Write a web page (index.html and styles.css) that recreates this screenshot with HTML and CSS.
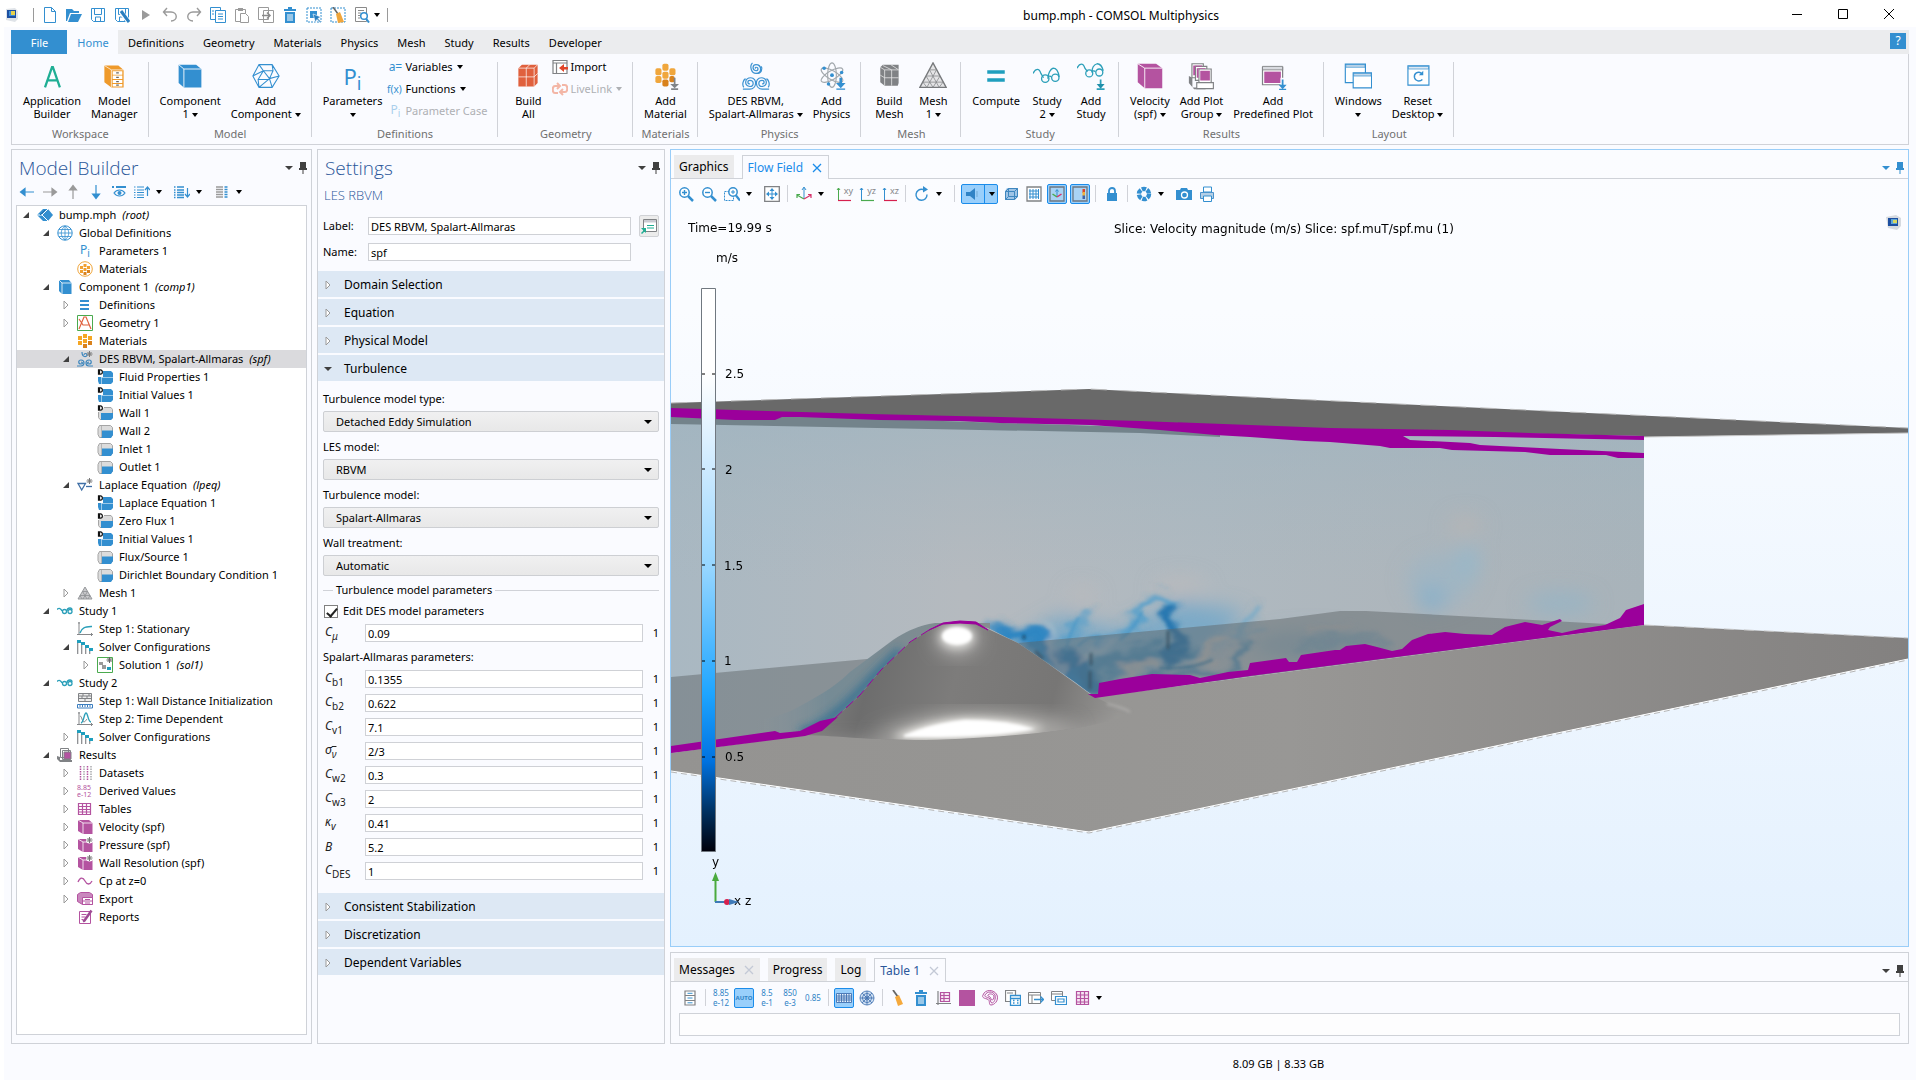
FILE: index.html
```html
<!DOCTYPE html>
<html lang="en">
<head>
    <meta charset="UTF-8">
    <meta name="viewport" content="width=device-width, initial-scale=1.0">
    <title>bump.mph - COMSOL Multiphysics</title>
    <link rel="stylesheet" href="styles.css">
</head>
<body>
    <!-- Icon sprite -->
    <svg class="sprite" aria-hidden="true">
        <!-- quick access -->
        <symbol id="i-app" viewBox="0 0 16 16"><path d="M2 2l9-1 3 3v8l-3 3-9-2z" fill="#dfe3e8"/><rect x="3" y="3" width="9" height="8" fill="#1d4fa0"/><rect x="5" y="4" width="6" height="5" fill="#3f8fd8"/><rect x="7" y="4" width="4" height="4" fill="#e9d24a"/></symbol>
        <symbol id="i-new" viewBox="0 0 16 16"><path d="M2.500.5h7l4 4v11h-11zM9.500.5v4h4" fill="#fff" stroke="#338fd0"/></symbol>
        <symbol id="i-open" viewBox="0 0 16 16"><path d="M0 2h6l2 2h5v2H4L1 14H0z" fill="#338fd0"/><path d="M5 7h11l-4 8H2z" fill="#338fd0"/></symbol>
        <symbol id="i-save" viewBox="0 0 16 16"><path d="M1.500 1.500h13v13h-11l-2-2zM4.500 1.500v6h7v-6M5.500 14v-4h5v4" fill="none" stroke="#338fd0"/></symbol>
        <symbol id="i-saveas" viewBox="0 0 16 16"><path d="M1.500 1.500h13v13h-11l-2-2zM4.500 1.500v6h7v-6M5.500 14v-4h5v4" fill="none" stroke="#338fd0"/><path d="M7 5l8 10" stroke="#fff" stroke-width="5"/><path d="M7 4l8 11" stroke="#2a7fc0" stroke-width="3"/></symbol>
        <symbol id="i-play" viewBox="0 0 16 16"><path d="M4 3l8 5-8 5z" fill="#9a9a9a"/></symbol>
        <symbol id="i-undo" viewBox="0 0 16 16"><path d="M5 1L1.500 5 5 9M2 5h7c7 0 7 9 0 9" fill="none" stroke="#9a9a9a" stroke-width="1.400"/></symbol>
        <symbol id="i-redo" viewBox="0 0 16 16"><path d="M11 1l3.500 4L11 9M14 5H7c-7 0-7 9 0 9" fill="none" stroke="#9a9a9a" stroke-width="1.400"/></symbol>
        <symbol id="i-copy" viewBox="0 0 16 16"><path d="M.5.5h10v12H.5z" fill="#fff" stroke="#338fd0"/><path d="M5.500 3.500h10v12h-10z" fill="#fff" stroke="#338fd0"/><path d="M8 7h5M8 9.500h5M8 12h5M2 4h2M2 7h2" stroke="#338fd0"/></symbol>
        <symbol id="i-paste" viewBox="0 0 16 16"><path d="M1.500 2.500h10v12h-10z" fill="#fff" stroke="#9a9a9a"/><path d="M4 1h5v3H4z" fill="#9a9a9a"/><path d="M6.500 6.500h5l3 3v6h-8z" fill="#fff" stroke="#9a9a9a"/></symbol>
        <symbol id="i-dup" viewBox="0 0 16 16"><path d="M.5.5h10v12H.5zM5.500 3.500h10v12h-10z" fill="#fff" stroke="#9a9a9a"/><path d="M4 8.500h8M9 5.500l3 3-3 3" fill="none" stroke="#8a8a8a" stroke-width="1.500"/></symbol>
        <symbol id="i-trash" viewBox="0 0 16 16"><path d="M2 2h4V0h4v2h4v2H2zM3 5h10v11H3z" fill="#338fd0"/><path d="M6 7v7M8 7v7M10 7v7" stroke="#fff"/></symbol>
        <symbol id="i-select" viewBox="0 0 16 16"><path d="M1 1h14v14H1z" fill="none" stroke="#338fd0" stroke-dasharray="2 1"/><path d="M4 4h7v7H4z" fill="#338fd0"/><path d="M7 7l8 3-3 1.500 3 3-1 1-3-3-1.500 3z" fill="#2a7fc0" stroke="#fff" stroke-width=".6"/></symbol>
        <symbol id="i-clearsel" viewBox="0 0 16 16"><path d="M1 1h14v14H1z" fill="none" stroke="#338fd0" stroke-dasharray="2 1"/><path d="M3 0l5 7" stroke="#666" stroke-width="1.500"/><path d="M6 7l4-2 4 10-6 1z" fill="#f0a63c"/></symbol>
        <symbol id="i-find" viewBox="0 0 16 16"><path d="M1.500.5h11v14h-11z" fill="#fff" stroke="#8a8a8a"/><path d="M4 3.500h6M4 6h3M4 8.500h2M4 11h2" stroke="#8a8a8a"/><circle cx="10" cy="9" r="3.300" fill="#fff" stroke="#338fd0" stroke-width="1.500"/><path d="M12 11.500l3 4" stroke="#338fd0" stroke-width="2"/></symbol>
        <!-- ribbon, large -->
        <symbol id="r-appbuilder" viewBox="0 0 32 32"><path d="M8 29l8-23h1l8 23M10.500 21h12" fill="none" stroke="#1fae94" stroke-width="2.600"/></symbol>
        <symbol id="r-manager" viewBox="0 0 32 32"><path d="M5 4h16l6 5v20H13L5 23z" fill="#ef9a2b"/><path d="M5 4l8 5h14M13 9v20" stroke="#fff" stroke-width=".8" fill="none"/><path d="M14.500 10.500h11v4h-11zM14.500 15.500h11v4h-11zM14.500 20.500h11v3.500h-11zM14.500 25h11v3h-11z" fill="#fff"/><path d="M18.500 12.500h3M18.500 17.500h3M18.500 22.500h3M18.500 26.500h3" stroke="#666" stroke-width="1.500"/></symbol>
        <symbol id="r-component" viewBox="0 0 32 32"><path d="M3 3h20l6 5v21H9l-6-5z" fill="#338fd0"/><path d="M3 3l6 5h20M9 8v21" fill="none" stroke="#fff" stroke-width="1"/></symbol>
        <symbol id="r-addcomp" viewBox="0 0 32 32"><path d="M8 3h15l8 13-8 13H8L1 16zM8 3l5 7h11l-1-7M13 10L1 16M13 10l7 9 11-3M24 10l-4 9M20 19l3 10M8 29l12-10M8 29l-1-9h13M7 20l6-10" fill="none" stroke="#338fd0" stroke-width="1.200"/></symbol>
        <symbol id="r-buildall" viewBox="0 0 32 32"><path d="M5 7l4-4h18v21l-4 4H5z" fill="#e0603d"/><path d="M5 7h18v21M23 7l4-4M14 7v21M5 17h18l4-4M14 7l4-4" fill="none" stroke="#fff" stroke-width=".8"/></symbol>
        <symbol id="r-addmat" viewBox="0 0 32 32"><g fill="#f0a63c"><rect x="5" y="7" width="7" height="8" rx="2"/><rect x="5" y="16" width="7" height="8" rx="2"/><rect x="13" y="2" width="7" height="8" rx="2"/><rect x="13" y="11" width="7" height="8" rx="2"/><rect x="21" y="7" width="7" height="8" rx="2"/></g><g fill="#d9821c"><rect x="13" y="20" width="7" height="8" rx="2"/><rect x="21" y="16" width="6" height="7" rx="2"/></g><path d="M27 18v8M23 31h8" stroke="#808488" stroke-width="2"/><path d="M22 25h10l-5 5z" fill="#808488"/></symbol>
        <symbol id="r-swirl" viewBox="0 0 32 32"><g fill="none" stroke="#3d93d2" stroke-width="1.400"><path d="M12 1c-4 4-1 12 4 12 7 0 7-10 0-10-4 0-5 6 0 7 3 0 3-4 0-4-1 0-1 1-.5 1.500M17 13c5 0 7-5 5-8"/><path d="M1 31h8c8 0 9-13 1-13-7 0-8 9-1 10 5 0 5-7 0-7-3 0-3 4 0 4M2 29c-2-3-1-8 2-10"/><path d="M31 31h-8c-8 0-9-13-1-13 7 0 8 9 1 10-5 0-5-7 0-7 3 0 3 4 0 4M30 29c2-3 1-8-2-10"/></g></symbol>
        <symbol id="r-addphys" viewBox="0 0 32 32"><g fill="none" stroke="#a2a8ad" stroke-width="1.300"><ellipse cx="16" cy="15" rx="5" ry="14"/><ellipse cx="16" cy="15" rx="5" ry="14" transform="rotate(60 16 15)"/><ellipse cx="16" cy="15" rx="5" ry="14" transform="rotate(-60 16 15)"/></g><g fill="#338fd0"><circle cx="16" cy="15" r="2.200"/><circle cx="7" cy="7" r="2"/><circle cx="27" cy="12" r="2"/><circle cx="12" cy="25" r="2"/></g><path d="M26 18v8" stroke="#338fd0" stroke-width="3"/><path d="M20.500 24h11L26 30z" fill="#338fd0"/><path d="M21 31h10" stroke="#338fd0" stroke-width="1.500"/></symbol>
        <symbol id="r-buildmesh" viewBox="0 0 32 32"><path d="M6 6l3-3h18v21l-1 3H11l-5-4z" fill="#808285"/><path d="M6 6l5 3h16M11 9v18M19 9v18M11 18h16M6 15l5 3M9 4l10 5M18 3l9 6" fill="none" stroke="#e6e6e6" stroke-width=".9"/></symbol>
        <symbol id="r-mesh" viewBox="0 0 32 32"><path d="M16 1l15 28H1z" fill="#e4e4e6" stroke="#76787b" stroke-width="1.500"/><path d="M12 9h8M8 16h16M4.500 23h23M12 9l11 20M20 9L9 29M8 16l8 13M24 16l-8 13M4.500 23L9 29M27.500 23L23 29" fill="none" stroke="#85878a" stroke-width=".9"/></symbol>
        <symbol id="r-compute" viewBox="0 0 32 32"><path d="M6 11.500h20M6 20.500h20" stroke="#1f9fbe" stroke-width="4"/></symbol>
        <symbol id="r-study" viewBox="0 0 32 32"><g fill="none" stroke="#2b9fb9" stroke-width="1.500"><path d="M0 13c3-6 7-6 9 0l3 5M17 17c1-1 3-1 4 0M17 19c0-6 3-11 6-12 4 0 6 4 7 10"/><circle cx="14" cy="19" r="4.200"/><circle cx="25.500" cy="18" r="4.200"/></g></symbol>
        <symbol id="r-addstudy" viewBox="0 0 32 32"><g fill="none" stroke="#2b9fb9" stroke-width="1.500"><path d="M0 7c3-6 7-6 9 0l3 4M17 11c1-1 3-1 4 0M17 12c0-6 3-9 6-10 4 0 6 4 7 8"/><circle cx="14" cy="13" r="4"/><circle cx="25.500" cy="12" r="4"/></g><path d="M27 20v6M22.500 31h9" stroke="#2b9fb9" stroke-width="2"/><path d="M22.500 25h9L27 30.500z" fill="#1f8faa"/></symbol>
        <symbol id="r-velocity" viewBox="0 0 32 32"><path d="M2 2h21l7 5v23H10l-8-7z" fill="#b453a0"/><path d="M2 2l8 5h20M10 7v23" fill="none" stroke="#fff" stroke-width="1"/></symbol>
        <symbol id="r-plotgroup" viewBox="0 0 32 32"><path d="M1 16l4 2v11h16l-1 2H7l-6-7z" fill="#808285"/><g fill="#fff" stroke="#808285" stroke-width="1.300"><path d="M4.500 2h13v16h-13z"/><path d="M8.500 5h13v16h-13z"/><path d="M12.500 8h14v16h-14z"/></g><path d="M6 4h10v1H8v10H6zM10 7h10v1h-8v10h-2zM14 10h11v11H14z" fill="#b453a0"/><path d="M10 23.500h19v7H10z" fill="#fff" stroke="#808285" stroke-width="1.300"/></symbol>
        <symbol id="r-predef" viewBox="0 0 32 32"><path d="M4 6h23v20H4z" fill="#fff" stroke="#808285" stroke-width="1.400"/><path d="M4 5h23v4H4z" fill="#d9dbe0" stroke="#808285"/><path d="M6 11h19v13H6z" fill="#b453a0"/><path d="M27 18v13" stroke="#fafbff" stroke-width="5"/><path d="M27 20v8M23 31.500h8" stroke="#338fd0" stroke-width="2"/><path d="M22.500 26h9L27 31z" fill="#338fd0"/></symbol>
        <symbol id="r-windows" viewBox="0 0 32 32"><g fill="#fff" stroke="#338fd0" stroke-width="1.300"><path d="M1.500 2.500h23v21h-23z"/><path d="M10.500 12.500h21v17h-21z"/></g><path d="M2 3h22v3H2zM11 13h20v3H11z" fill="#c5d9ea" stroke="#338fd0" stroke-width=".8"/></symbol>
        <symbol id="r-reset" viewBox="0 0 32 32"><path d="M4.500 4.500h24v22h-24z" fill="#fff" stroke="#338fd0" stroke-width="1.300"/><path d="M5 5h23v3H5z" fill="#dfe9f3" stroke="#338fd0" stroke-width=".8"/><path d="M20 13c-4-3-9 0-8 5 1 4 6 5 9 2" fill="none" stroke="#338fd0" stroke-width="1.600"/><path d="M17 15h5v-5z" fill="#338fd0"/></symbol>
        <symbol id="i-import" viewBox="0 0 16 16"><path d="M1 1.500h14v13H1zM1 4h14M4.500 4v10" fill="#fff" stroke="#808285" stroke-width="1.200"/><path d="M7 9l5-4v3h4v2.500h-4V13z" fill="#e0452a"/></symbol>
        <symbol id="i-livelink" viewBox="0 0 16 16"><path d="M6 12H3c-3 0-3-7 0-7h5M10 4h3c3 0 3 7 0 7H8M5 2l3 3-3 3M11 8l-3 3 3 3" fill="none" stroke="#f3b6a6" stroke-width="2"/></symbol>
        <!-- pins, chevrons -->
        <symbol id="i-pin" viewBox="0 0 10 12"><path d="M2 0h6v6h1v2H1V6h1zM4.500 8h1v4h-1z" fill="currentColor"/></symbol>
        <symbol id="i-x" viewBox="0 0 12 12"><path d="M2 2l8 8M10 2l-8 8" stroke="currentColor" stroke-width="1.300"/></symbol>
        <symbol id="i-open-tri" viewBox="0 0 8 8"><path d="M7 1v6H1z" fill="#404040"/></symbol>
        <symbol id="i-closed-tri" viewBox="0 0 8 10"><path d="M2 1l4 4-4 4z" fill="#fff" stroke="#9a9a9a"/></symbol>
        <symbol id="i-down-tri" viewBox="0 0 10 8"><path d="M1 2h8L5 6z" fill="#404040"/></symbol>
        <!-- model builder toolbar -->
        <symbol id="i-left" viewBox="0 0 16 16"><path d="M15 8H2M6 4.500L1.500 8 6 11.500z" fill="#338fd0" stroke="#338fd0" stroke-width="1.200"/></symbol>
        <symbol id="i-right" viewBox="0 0 16 16"><path d="M1 8h13M10 4.500L14.500 8 10 11.500z" fill="#9a9a9a" stroke="#9a9a9a" stroke-width="1.200"/></symbol>
        <symbol id="i-up" viewBox="0 0 16 16"><path d="M8 15V2M4.500 6L8 1.500 11.500 6z" fill="#9a9a9a" stroke="#9a9a9a" stroke-width="1.200"/></symbol>
        <symbol id="i-down" viewBox="0 0 16 16"><path d="M8 1v13M4.500 10L8 14.500 11.500 10z" fill="#338fd0" stroke="#338fd0" stroke-width="1.200"/></symbol>
        <symbol id="i-eye" viewBox="0 0 16 16"><path d="M1 3h2M5 3h10" stroke="#338fd0" stroke-width="2"/><path d="M3 9c3-4 8-4 11 0-3 4-8 4-11 0z" fill="none" stroke="#338fd0" stroke-width="1.200"/><circle cx="8.500" cy="9" r="2" fill="#338fd0"/></symbol>
        <symbol id="i-listup" viewBox="0 0 16 16"><path d="M0 3h10M0 6h10M0 8.500h10M0 11h10M0 13.500h10" stroke="#338fd0" stroke-dasharray="1.500 1.500 7"/><path d="M13.500 12V4M11 6l2.500-3L16 6" fill="none" stroke="#338fd0" stroke-width="1.200"/></symbol>
        <symbol id="i-listdown" viewBox="0 0 16 16"><path d="M0 3h10M0 6h10M0 8.500h10M0 11h10M0 13.500h10" stroke="#338fd0" stroke-width="1.400" stroke-dasharray="1.500 1.500 7"/><path d="M13.500 4v8M11 10l2.500 3 2.500-3" fill="none" stroke="#338fd0" stroke-width="1.200"/></symbol>
        <symbol id="i-listcols" viewBox="0 0 16 16"><path d="M2 3h7M2 5.500h7M2 8h7M2 10.500h7M2 13h7" stroke="#9a9a9a" stroke-width="1.400"/><path d="M10.500 3h3M10.500 5.500h3M10.500 8h3M10.500 10.500h3M10.500 13h3" stroke="#338fd0" stroke-width="1.400"/></symbol>
        <!-- tree -->
        <symbol id="t-root" viewBox="0 0 16 16"><path d="M0 8l6-6h5l5 6-5 6H6z" fill="#338fd0"/><path d="M11 2L5 8l6 6M0 8h5" fill="none" stroke="#fff"/><path d="M3 8l5-5" stroke="#1f6ca8"/></symbol>
        <symbol id="t-globe" viewBox="0 0 16 16"><circle cx="8" cy="8" r="7.200" fill="#fff" stroke="#338fd0"/><path d="M8 1v14M1 8h14M2 4.500h12M2 11.500h12M8 1c-5 4-5 10 0 14M8 1c5 4 5 10 0 14" fill="none" stroke="#338fd0" stroke-width=".8"/></symbol>
        <symbol id="t-matglobe" viewBox="0 0 16 16"><circle cx="8" cy="8" r="7.300" fill="#fff" stroke="#f0a63c"/><g fill="#f0a030"><path d="M3 5h3v3H3zM3 9h3v3H3zM6.500 3h3v3h-3zM6.500 7h3v3h-3zM10 5h3v3h-3z"/></g><path d="M6.500 11h3v3h-3zM10 9h3v3h-3z" fill="#d9821c"/></symbol>
        <symbol id="t-mat" viewBox="0 0 16 16"><path d="M1 3h4v4H1zM1 8h4v4H1zM6 1h4v4H6zM6 6h4v4H6zM11 3h4v4h-4z" fill="#f5a623"/><path d="M6 11h4v4H6zM11 8h4v4h-4z" fill="#d9821c"/></symbol>
        <symbol id="t-comp" viewBox="0 0 16 16"><path d="M2 1h10l2.500 3v11H5l-3-3z" fill="#338fd0"/><path d="M2 1l3 3h9.500M5 4v11" fill="none" stroke="#fff" stroke-width=".8"/></symbol>
        <symbol id="t-defs" viewBox="0 0 16 16"><path d="M3 4h9M3 8h9M3 12h9" stroke="#338fd0" stroke-width="2"/></symbol>
        <symbol id="t-geom" viewBox="0 0 16 16"><path d="M.5.5h15v15H.5z" fill="#fff" stroke="#4aaa4e"/><path d="M2 14L7 2h2l5 12M2 4l4 6h6" fill="none" stroke="#e0603d" stroke-width="1.200"/></symbol>
        <symbol id="t-swirl" viewBox="0 0 16 16"><g fill="none" stroke="#3d86bd" stroke-width="1.200"><path d="M0 15h4c4 0 4-6 0-6-3 0-3 4 0 4 2 0 2-2 0-2M16 15h-4c-4 0-4-6 0-6 3 0 3 4 0 4-2 0-2-2 0-2M5 1c0 6 5 5 5 3s-3-2-3 0"/></g><path d="M12.500 0v6M9.500 3h6M10.500 1l4 4M14.500 1l-4 4" stroke="#777"/></symbol>
        <symbol id="t-dfull" viewBox="0 0 16 16"><path d="M6 2h8l2 2v9l-2 2H2l-1-3V8h5z" fill="#338fd0"/><path d="M4 8.500h12M4.500 8v7" stroke="#b9d8ee" stroke-width=".8"/><path d="M1.500.8h2c2.500 0 2.500 4.400 0 4.400h-2zM2.500 1v4" fill="none" stroke="#111" stroke-width="1.200"/></symbol>
        <symbol id="t-dhalf" viewBox="0 0 16 16"><path d="M7 2.500h7l1.500 2v8l-1.500 2H3l-1.500-2V7" fill="#dcdcdc" stroke="#a5a5a5"/><path d="M4 8h12v5l-2 2H4z" fill="#338fd0"/><path d="M1.500.8h2c2.500 0 2.500 4.400 0 4.400h-2zM2.500 1v4" fill="none" stroke="#111" stroke-width="1.200"/></symbol>
        <symbol id="t-half" viewBox="0 0 16 16"><path d="M2.500 2.500h11l2 2v8l-2 2h-11l-1.500-3v-6z" fill="#dcdcdc" stroke="#a5a5a5"/><path d="M4.500 7.500H16V12l-2 3H4.500z" fill="#338fd0"/><path d="M4.500 3v11" stroke="#b5b5b5"/></symbol>
        <symbol id="t-laplace" viewBox="0 0 16 16"><path d="M1 6.500h7.500L4.700 13z" fill="none" stroke="#3f6fa6" stroke-width="1.300"/><path d="M9 9.500h6" stroke="#3f6fa6" stroke-width="1.300"/><path d="M12.500 1v6M9.500 4h6M10.500 2l4 4M14.500 2l-4 4" stroke="#777"/></symbol>
        <symbol id="t-mesh" viewBox="0 0 16 16"><path d="M8 2l7 12H1z" fill="#c9c9cc" stroke="#97999c"/><path d="M5.500 6.500h5M3 10.500h10M5.500 6.500L10 14M10.500 6.500L6 14M3 10.500L5 14M13 10.500L11 14" stroke="#8d8f92" stroke-width=".8"/></symbol>
        <symbol id="t-study" viewBox="0 0 16 16"><g fill="none" stroke="#2b9fb9" stroke-width="1.300"><path d="M0 6.500c2-2 4-1 5 1.500M10 8c0-2 1-3 3-3s2 1 2 2"/><circle cx="7.500" cy="8.500" r="2"/><circle cx="13" cy="8.500" r="2"/></g></symbol>
        <symbol id="t-stat" viewBox="0 0 16 16"><path d="M2 1v13M0 13.500h16M1 2h2M14.500 12v3" stroke="#85878a" fill="none"/><path d="M3 12c2-6 5-6 12-6.500" fill="none" stroke="#2b9fb9" stroke-width="1.400"/></symbol>
        <symbol id="t-time" viewBox="0 0 16 16"><path d="M2 1v13M0 13.500h16M1 2h2M14.500 12v3M3 5c2 0 2 6 4 6 1 0 2-2 3-3" stroke="#85878a" fill="none"/><path d="M4 12c3-1 3-10 5-10s2 9 5 9" fill="none" stroke="#2b9fb9" stroke-width="1.400"/></symbol>
        <symbol id="t-solver" viewBox="0 0 16 16"><path d="M.7 4v11M4.700 6v9M8.700 8v7M12.700 11v4" stroke="#85878a" stroke-width="1.200"/><path d="M0 1h4v3H0zM4 3h4v3H4zM8 6h4v3H8zM12 9h4v3h-4z" fill="#1f9fbe"/></symbol>
        <symbol id="t-sol" viewBox="0 0 16 16"><path d="M.5.5h15v15H.5z" fill="#fff" stroke="#4aaa4e"/><path d="M2 5h4v3H2zM5 8h4v4H5z" fill="#9a9a9a"/><path d="M10 10h4v3h-4z" fill="#1f9fbe"/><path d="M12.500 0v6M9.500 3h6M10.500 1l4 4M14.500 1l-4 4" stroke="#666"/></symbol>
        <symbol id="t-wall" viewBox="0 0 16 16"><path d="M1.500.5h13v8h-13zM1.500 3h13M1.500 5.500h13M6 .5V3M10 3v2.500M5 3v2.500M8 5.500v3M12 .5V3" fill="#eee" stroke="#808285"/><path d="M.5 11.500h15v3.500H.5z" fill="#fff" stroke="#3c7ec0"/><path d="M3 12v2M5.500 12v2M8 12v2M10.500 12v2M13 12v2" stroke="#3c7ec0"/></symbol>
        <symbol id="t-results" viewBox="0 0 16 16"><path d="M3.500 1.500h8v9h-8zM5.500 3.500h8v9h-8z" fill="#fff" stroke="#808285"/><path d="M0 9l3 1v3h12v2H3l-3-3z" fill="#808285"/><path d="M7 5h7v7H7z" fill="#b453a0" stroke="#808285"/></symbol>
        <symbol id="t-data" viewBox="0 0 16 16"><path d="M3.500 1v14M10.500 1v14" stroke="#b453a0" stroke-width="1.500" stroke-dasharray="1.500 1"/><path d="M7 1v14M14 1v14" stroke="#a9a9ad" stroke-width="1.500" stroke-dasharray="1.500 1"/></symbol>
        <symbol id="t-table" viewBox="0 0 16 16"><path d="M1.500 2.500h12v11h-12zM1.500 5.500h12M1.500 8.500h12M1.500 11h12M5.500 2.500v11M9.500 2.500v11" fill="#fff" stroke="#b453a0" stroke-width="1.200"/></symbol>
        <symbol id="t-vel" viewBox="0 0 16 16"><path d="M1 1h11l3.500 3v11H6l-5-3z" fill="#b453a0"/><path d="M1 1l5 3h9.500M6 4v11" fill="none" stroke="#fff" stroke-width=".8"/></symbol>
        <symbol id="t-velstar" viewBox="0 0 16 16"><path d="M1 2h11l3.500 3v10H6l-5-3z" fill="#b453a0"/><path d="M1 2l5 3h9.500M6 5v10" fill="none" stroke="#fff" stroke-width=".8"/><circle cx="12.500" cy="3" r="3.500" fill="#fff"/><path d="M12.500 0v6M9.500 3h6M10.500 1l4 4M14.500 1l-4 4" stroke="#777"/></symbol>
        <symbol id="t-wave" viewBox="0 0 16 16"><path d="M1 9c2-5 5-5 7-1s5 4 7 0" fill="none" stroke="#b453a0" stroke-width="1.300"/></symbol>
        <symbol id="t-export" viewBox="0 0 16 16"><path d="M.5 3.500l3-2h9l3 2v10h-10l-5-3z" fill="#c987bd" stroke="#b453a0"/><path d="M5.500 6.500h10v7h-10zM5.500 10h10M8 8.500h5M8 12h5" fill="#fff" stroke="#b453a0"/></symbol>
        <symbol id="t-report" viewBox="0 0 16 16"><path d="M2.500 2.500h11v12h-11zM4.500 5.500h5M4.500 8h4M4.500 10.500h2" fill="#fff" stroke="#b453a0"/><path d="M14.500 1.500l-7 10-1.500 1" stroke="#9e4a94" stroke-width="2.500"/></symbol>
        <symbol id="i-panel" viewBox="0 0 16 16"><path d="M2.500 1.500h13v12h-13z" fill="#fff" stroke="#808285"/><path d="M3 2h12v2.500H3z" fill="#c9cbd2"/><path d="M6 7.500h7M6 10h7" stroke="#1fae94"/><path d="M0 10h5v5l-1.500-1.500L1 16l-1-1 2.500-2.500z" fill="#1fae94"/></symbol>
        <!-- graphics toolbar -->
        <symbol id="g-in" viewBox="0 0 16 16"><circle cx="6.500" cy="6.500" r="4.700" fill="#fff" stroke="#338fd0" stroke-width="1.500"/><path d="M10 10l5 5" stroke="#338fd0" stroke-width="2.500"/><path d="M4 6.500h5M6.500 4v5" stroke="#338fd0" stroke-width="1.400"/></symbol>
        <symbol id="g-out" viewBox="0 0 16 16"><circle cx="6.500" cy="6.500" r="4.700" fill="#fff" stroke="#338fd0" stroke-width="1.500"/><path d="M10 10l5 5" stroke="#338fd0" stroke-width="2.500"/><path d="M4 6.500h5" stroke="#338fd0" stroke-width="1.400"/></symbol>
        <symbol id="g-box" viewBox="0 0 16 16"><path d="M.5 5.500h9v9h-9z" fill="none" stroke="#338fd0" stroke-dasharray="2 1"/><circle cx="9" cy="6" r="4.200" fill="#fff" stroke="#338fd0" stroke-width="1.500"/><path d="M12 9.500l4 5" stroke="#338fd0" stroke-width="2.200"/><path d="M7 6h4M9 4v4" stroke="#338fd0"/></symbol>
        <symbol id="g-extent" viewBox="0 0 16 16"><path d="M.7.700h14.600v14.600H.7z" fill="#fff" stroke="#808285" stroke-width="1.300"/><path d="M8 2l2.500 3h-5zM8 14l2.500-3h-5zM2 8l3-2.500v5zM14 8l-3-2.500v5z" fill="#338fd0"/><path d="M8 5v6M5 8h6" stroke="#338fd0"/></symbol>
        <symbol id="g-axes" viewBox="0 0 16 16"><path d="M8 13V2M6 4l2-3 2 3" fill="none" stroke="#338fd0"/><path d="M8 13L1 9M1 12V8.500h3" fill="none" stroke="#4aaa4e" stroke-width="1.200"/><path d="M8 13l7-4M12 8.500h3V12" fill="none" stroke="#d6336c" stroke-width="1.200"/></symbol>
        <symbol id="g-xy" viewBox="0 0 16 16"><path d="M2.500 15V2M1 4l1.500-2L4 4" fill="none" stroke="#4aaa4e"/><path d="M2 14.500h13" stroke="#d6204e" stroke-width="1.200"/></symbol>
        <symbol id="g-yz" viewBox="0 0 16 16"><path d="M2.500 15V2M1 4l1.500-2L4 4" fill="none" stroke="#338fd0"/><path d="M2 14.500h13" stroke="#4aaa4e" stroke-width="1.200"/></symbol>
        <symbol id="g-xz" viewBox="0 0 16 16"><path d="M2.500 15V2M1 4l1.500-2L4 4" fill="none" stroke="#338fd0"/><path d="M2 14.500h13" stroke="#d6204e" stroke-width="1.200"/></symbol>
        <symbol id="g-rot" viewBox="0 0 16 16"><path d="M9 3.500a5.500 5.500 0 1 0 4 5" fill="none" stroke="#338fd0" stroke-width="1.400"/><path d="M9 0l5 3.500-5 3z" fill="#338fd0"/></symbol>
        <symbol id="g-light" viewBox="0 0 16 16"><path d="M2 6h4l5-4v12l-5-4H2z" fill="#2f83c6"/><path d="M13 5v6" stroke="#7fb7e2" stroke-width="1.500"/></symbol>
        <symbol id="g-wire" viewBox="0 0 16 16"><path d="M4 2h11v9l-3 3H2V5z" fill="#9fc4e6"/><path d="M2.500 5.500h9v8h-9zM5.500 2.500h9v8h-9zM2.500 5.500l3-3M11.500 5.500l3-3M11.500 13.500l3-3M2.500 13.500l3-3" fill="none" stroke="#3f87bf"/></symbol>
        <symbol id="g-grid" viewBox="0 0 16 16"><path d="M1 1h14v14H1z" fill="#fff" stroke="#808285" stroke-width="1.300"/><path d="M4 3v10M7 3v10M10 3v10M3 5h10M3 8h10M3 11h10M12.500 3v10" stroke="#338fd0"/></symbol>
        <symbol id="g-triad" viewBox="0 0 16 16"><path d="M1 1h14v14H1z" fill="#a9d3f5" stroke="#6d7780" stroke-width="1.300"/><path d="M8 11V4M6.500 5.500L8 3.500l1.500 2" stroke="#338fd0" fill="none"/><path d="M8 11L3.500 8" stroke="#4aaa4e" stroke-width="1.500"/><path d="M8 11l4.500-3" stroke="#d6336c" stroke-width="1.500"/></symbol>
        <symbol id="g-legend" viewBox="0 0 16 16"><path d="M1 1h14v14H1z" fill="#a9d3f5" stroke="#6d7780" stroke-width="1.300"/><path d="M10.500 3h2.500v4h-2.500z" fill="#d9452a"/><path d="M10.500 6h2.500v4h-2.500z" fill="#f0b23c"/><path d="M10.500 9.500h2.500V13h-2.500z" fill="#3f62a8"/></symbol>
        <symbol id="g-lock" viewBox="0 0 16 16"><path d="M3 7h10v8H3z" fill="#338fd0"/><path d="M5 8V5c0-4 6-4 6 0v3" fill="none" stroke="#338fd0" stroke-width="1.800"/></symbol>
        <symbol id="g-aperture" viewBox="0 0 16 16"><circle cx="8" cy="8" r="5" fill="none" stroke="#338fd0" stroke-width="4.500" stroke-dasharray="4.200 1"/><circle cx="8" cy="8" r="2.500" fill="#fafbff"/></symbol>
        <symbol id="g-camera" viewBox="0 0 16 16"><path d="M0 4h4l1-2h6l1 2h4v10H0z" fill="#338fd0"/><circle cx="8.500" cy="9" r="3" fill="none" stroke="#fff" stroke-width="1.300"/></symbol>
        <symbol id="g-print" viewBox="0 0 16 16"><path d="M4.500 1h8v5h-8z" fill="#fff" stroke="#338fd0"/><path d="M1.500 6.500h13v6h-13z" fill="#b5cfe6" stroke="#4b93cc"/><path d="M4.500 10h8v5.500h-8z" fill="#fff" stroke="#338fd0"/></symbol>
        <!-- table toolbar -->
        <symbol id="b-prec" viewBox="0 0 16 16"><path d="M3 1h10v14H3zM3 5.500h10M3 10.500h10" fill="#fff" stroke="#808285" stroke-width="1.200"/><path d="M5.500 3.300h5M5.500 8h5M5.500 12.800h5" stroke="#338fd0"/></symbol>
        <symbol id="b-full" viewBox="0 0 16 16"><path d="M.5 3.500h15v9H.5zM.5 6h15M.5 8h15M.5 10h15M3 4v8M5.500 4v8M8 4v8M10.500 4v8M13 4v8" fill="#e8f3fd" stroke="#3f6fb0" stroke-width=".9"/></symbol>
        <symbol id="b-polar" viewBox="0 0 16 16"><circle cx="8" cy="8" r="7" fill="#cfdff2" stroke="#5a86bd"/><circle cx="8" cy="8" r="4.500" fill="none" stroke="#5a86bd"/><circle cx="8" cy="8" r="2" fill="none" stroke="#5a86bd"/><path d="M8 1v14M1 8h14M3 3l10 10M13 3L3 13" stroke="#3f6fb0" stroke-width=".8"/></symbol>
        <symbol id="b-broom" viewBox="0 0 16 16"><path d="M3 0l5 7" stroke="#666" stroke-width="1.800"/><path d="M5 7l4-2 4 9-5 2z" fill="#f5a93c"/></symbol>
        <symbol id="b-graph" viewBox="0 0 16 16"><path d="M2 1v14M0 13.500h15" stroke="#808285" stroke-width="1.200"/><path d="M4.500 2.500h9v9h-9zM4.500 5.500h9M4.500 8.500h9M8 2.500v9" fill="#f6e6f3" stroke="#b453a0" stroke-width="1.200"/></symbol>
        <symbol id="b-square" viewBox="0 0 16 16"><path d="M0 0h16v16H0z" fill="#b453a0"/></symbol>
        <symbol id="b-contour" viewBox="0 0 16 16"><g fill="none" stroke="#b453a0"><path d="M1 5c2-6 11-6 14 0 2 6-3 10-6 10s0-5-4-6-5-2-4-4z"/><path d="M3 5c2-4 8-4 10 0 1 4-1 8-3 8s-1-4-3-5-5-1-4-3z"/><path d="M6 5c2-2 5-1 6 1 0 3-1 4-2 4s-1-2-2-3-3-1-2-2z"/></g></symbol>
        <symbol id="b-copytab" viewBox="0 0 16 16"><path d="M.5.5h10v11H.5zM2 3h6" fill="#fff" stroke="#808285" stroke-width="1.200"/><path d="M5.500 5.500h10v10h-10zM6 8.500h9M8 10.500h1.500M8 13h1.500M12 10.500h1.500M12 13h1.500" fill="#fff" stroke="#338fd0" stroke-width="1.300"/></symbol>
        <symbol id="b-exptab" viewBox="0 0 16 16"><path d="M.5 2.500h12v11H.5zM.5 5h12M4 5v8" fill="#fff" stroke="#808285"/><path d="M6 9.500h9M12.500 6.500l3 3-3 3" fill="none" stroke="#338fd0" stroke-width="1.400"/></symbol>
        <symbol id="b-wins" viewBox="0 0 16 16"><path d="M.5 1.500h11v9H.5zM1 4h10" fill="#fff" stroke="#808285"/><path d="M4.500 6.500h11v8h-11zM7 9h6v3H7z" fill="#fff" stroke="#338fd0" stroke-width="1.200"/></symbol>
        <symbol id="b-newtab" viewBox="0 0 16 16"><path d="M2.500 1.500h12v13h-12zM2.500 5h12M2.500 8.500h12M2.500 12h12M6.500 1.500v13M10.500 1.500v13" fill="#f6e6f3" stroke="#b453a0" stroke-width="1.200"/></symbol>
    </svg>

    <!-- Title bar -->
    <header class="titlebar">
        <svg class="app-icon"><use href="#i-app"/></svg>
        <span class="qsep"></span>
        <div class="quick">
            <button aria-label="New"><svg><use href="#i-new"/></svg></button>
            <button aria-label="Open"><svg><use href="#i-open"/></svg></button>
            <button aria-label="Save"><svg><use href="#i-save"/></svg></button>
            <button aria-label="Save As"><svg><use href="#i-saveas"/></svg></button>
            <button aria-label="Run"><svg><use href="#i-play"/></svg></button>
            <button aria-label="Undo"><svg><use href="#i-undo"/></svg></button>
            <button aria-label="Redo"><svg><use href="#i-redo"/></svg></button>
            <button aria-label="Copy"><svg><use href="#i-copy"/></svg></button>
            <button aria-label="Paste"><svg><use href="#i-paste"/></svg></button>
            <button aria-label="Duplicate"><svg><use href="#i-dup"/></svg></button>
            <button aria-label="Delete"><svg><use href="#i-trash"/></svg></button>
            <button aria-label="Select"><svg><use href="#i-select"/></svg></button>
            <button aria-label="Clear Selection"><svg><use href="#i-clearsel"/></svg></button>
            <button aria-label="Find"><svg><use href="#i-find"/></svg></button>
        </div>
        <i class="caret"></i>
        <span class="qsep after"></span>
        <h1>bump.mph - COMSOL Multiphysics</h1>
        <div class="winctl">
            <button aria-label="Minimize"><svg viewBox="0 0 12 12"><path d="M1 6.500h10" stroke="#000"/></svg></button>
            <button aria-label="Maximize"><svg viewBox="0 0 12 12"><path d="M1.500 1.500h9v9h-9z" fill="none" stroke="#000"/></svg></button>
            <button aria-label="Close"><svg viewBox="0 0 12 12"><path d="M1 1l10 10M11 1L1 11" stroke="#000"/></svg></button>
        </div>
    </header>

    <div class="app">
        <!-- Ribbon -->
        <nav class="ribbon-tabs">
            <button class="file">File</button>
            <button class="active">Home</button>
            <button>Definitions</button>
            <button>Geometry</button>
            <button>Materials</button>
            <button>Physics</button>
            <button>Mesh</button>
            <button>Study</button>
            <button>Results</button>
            <button>Developer</button>
            <button class="help">?</button>
        </nav>
        <div class="ribbon">
            <section class="group">
                <div class="items">
                    <button class="big"><svg><use href="#r-appbuilder"/></svg><span>Application<br>Builder</span></button>
                    <button class="big"><svg><use href="#r-manager"/></svg><span>Model<br>Manager</span></button>
                </div>
                <h2>Workspace</h2>
            </section>
            <section class="group">
                <div class="items">
                    <button class="big"><svg><use href="#r-component"/></svg><span>Component<br>1 <i class="caret"></i></span></button>
                    <button class="big"><svg><use href="#r-addcomp"/></svg><span>Add<br>Component <i class="caret"></i></span></button>
                </div>
                <h2>Model</h2>
            </section>
            <section class="group">
                <div class="items">
                    <button class="big"><b class="pi">P<sub>i</sub></b><span>Parameters<br><i class="caret"></i></span></button>
                    <div class="stack">
                        <button><b class="glyph">a=</b>Variables <i class="caret"></i></button>
                        <button><b class="glyph fx">f(x)</b>Functions <i class="caret"></i></button>
                        <button disabled><b class="glyph">P<sub>i</sub></b>Parameter Case</button>
                    </div>
                </div>
                <h2>Definitions</h2>
            </section>
            <section class="group">
                <div class="items">
                    <button class="big wide"><svg><use href="#r-buildall"/></svg><span>Build<br>All</span></button>
                    <div class="stack">
                        <button><svg><use href="#i-import"/></svg>Import</button>
                        <button disabled><svg><use href="#i-livelink"/></svg>LiveLink <i class="caret"></i></button>
                    </div>
                </div>
                <h2>Geometry</h2>
            </section>
            <section class="group">
                <div class="items">
                    <button class="big"><svg><use href="#r-addmat"/></svg><span>Add<br>Material</span></button>
                </div>
                <h2>Materials</h2>
            </section>
            <section class="group">
                <div class="items">
                    <button class="big"><svg><use href="#r-swirl"/></svg><span>DES RBVM,<br>Spalart-Allmaras <i class="caret"></i></span></button>
                    <button class="big"><svg><use href="#r-addphys"/></svg><span>Add<br>Physics</span></button>
                </div>
                <h2>Physics</h2>
            </section>
            <section class="group">
                <div class="items">
                    <button class="big"><svg><use href="#r-buildmesh"/></svg><span>Build<br>Mesh</span></button>
                    <button class="big"><svg><use href="#r-mesh"/></svg><span>Mesh<br>1 <i class="caret"></i></span></button>
                </div>
                <h2>Mesh</h2>
            </section>
            <section class="group">
                <div class="items">
                    <button class="big"><svg><use href="#r-compute"/></svg><span>Compute</span></button>
                    <button class="big"><svg><use href="#r-study"/></svg><span>Study<br>2 <i class="caret"></i></span></button>
                    <button class="big"><svg><use href="#r-addstudy"/></svg><span>Add<br>Study</span></button>
                </div>
                <h2>Study</h2>
            </section>
            <section class="group">
                <div class="items">
                    <button class="big"><svg><use href="#r-velocity"/></svg><span>Velocity<br>(spf) <i class="caret"></i></span></button>
                    <button class="big"><svg><use href="#r-plotgroup"/></svg><span>Add Plot<br>Group <i class="caret"></i></span></button>
                    <button class="big"><svg><use href="#r-predef"/></svg><span>Add<br>Predefined Plot</span></button>
                </div>
                <h2>Results</h2>
            </section>
            <section class="group">
                <div class="items">
                    <button class="big"><svg><use href="#r-windows"/></svg><span>Windows<br><i class="caret"></i></span></button>
                    <button class="big"><svg><use href="#r-reset"/></svg><span>Reset<br>Desktop <i class="caret"></i></span></button>
                </div>
                <h2>Layout</h2>
            </section>
        </div>

        <main class="desktop">
            <!-- Model Builder -->
            <section class="panel builder">
                <div class="panel-head"><h2>Model Builder</h2><i class="caret big-caret"></i><svg class="pin"><use href="#i-pin"/></svg></div>
                <div class="toolbar">
                    <button aria-label="Back"><svg><use href="#i-left"/></svg></button>
                    <button aria-label="Forward"><svg><use href="#i-right"/></svg></button>
                    <button aria-label="Move Up"><svg><use href="#i-up"/></svg></button>
                    <button aria-label="Move Down"><svg><use href="#i-down"/></svg></button>
                    <button aria-label="Show"><svg><use href="#i-eye"/></svg></button>
                    <button aria-label="Collapse"><svg><use href="#i-listup"/></svg></button>
                    <button class="drop" aria-label="Collapse options"><i class="caret"></i></button>
                    <button aria-label="Expand"><svg><use href="#i-listdown"/></svg></button>
                    <button class="drop" aria-label="Expand options"><i class="caret"></i></button>
                    <button aria-label="Columns"><svg><use href="#i-listcols"/></svg></button>
                    <button class="drop" aria-label="Column options"><i class="caret"></i></button>
                </div>
                <ul class="tree">
                    <li class="l0"><svg class="tw"><use href="#i-open-tri"/></svg><svg><use href="#t-root"/></svg>bump.mph <em>(root)</em></li>
                    <li class="l1"><svg class="tw"><use href="#i-open-tri"/></svg><svg><use href="#t-globe"/></svg>Global Definitions</li>
                    <li class="l2"><i class="tw"></i><b class="glyph">P<sub>i</sub></b>Parameters 1</li>
                    <li class="l2"><i class="tw"></i><svg><use href="#t-matglobe"/></svg>Materials</li>
                    <li class="l1"><svg class="tw"><use href="#i-open-tri"/></svg><svg><use href="#t-comp"/></svg>Component 1 <em>(comp1)</em></li>
                    <li class="l2"><svg class="tw"><use href="#i-closed-tri"/></svg><svg><use href="#t-defs"/></svg>Definitions</li>
                    <li class="l2"><svg class="tw"><use href="#i-closed-tri"/></svg><svg><use href="#t-geom"/></svg>Geometry 1</li>
                    <li class="l2"><i class="tw"></i><svg><use href="#t-mat"/></svg>Materials</li>
                    <li class="l2 selected"><svg class="tw"><use href="#i-open-tri"/></svg><svg><use href="#t-swirl"/></svg>DES RBVM, Spalart-Allmaras <em>(spf)</em></li>
                    <li class="l3"><i class="tw"></i><svg><use href="#t-dfull"/></svg>Fluid Properties 1</li>
                    <li class="l3"><i class="tw"></i><svg><use href="#t-dfull"/></svg>Initial Values 1</li>
                    <li class="l3"><i class="tw"></i><svg><use href="#t-dhalf"/></svg>Wall 1</li>
                    <li class="l3"><i class="tw"></i><svg><use href="#t-half"/></svg>Wall 2</li>
                    <li class="l3"><i class="tw"></i><svg><use href="#t-half"/></svg>Inlet 1</li>
                    <li class="l3"><i class="tw"></i><svg><use href="#t-half"/></svg>Outlet 1</li>
                    <li class="l2"><svg class="tw"><use href="#i-open-tri"/></svg><svg><use href="#t-laplace"/></svg>Laplace Equation <em>(lpeq)</em></li>
                    <li class="l3"><i class="tw"></i><svg><use href="#t-dfull"/></svg>Laplace Equation 1</li>
                    <li class="l3"><i class="tw"></i><svg><use href="#t-dhalf"/></svg>Zero Flux 1</li>
                    <li class="l3"><i class="tw"></i><svg><use href="#t-dfull"/></svg>Initial Values 1</li>
                    <li class="l3"><i class="tw"></i><svg><use href="#t-half"/></svg>Flux/Source 1</li>
                    <li class="l3"><i class="tw"></i><svg><use href="#t-half"/></svg>Dirichlet Boundary Condition 1</li>
                    <li class="l2"><svg class="tw"><use href="#i-closed-tri"/></svg><svg><use href="#t-mesh"/></svg>Mesh 1</li>
                    <li class="l1"><svg class="tw"><use href="#i-open-tri"/></svg><svg><use href="#t-study"/></svg>Study 1</li>
                    <li class="l2"><i class="tw"></i><svg><use href="#t-stat"/></svg>Step 1: Stationary</li>
                    <li class="l2"><svg class="tw"><use href="#i-open-tri"/></svg><svg><use href="#t-solver"/></svg>Solver Configurations</li>
                    <li class="l3"><svg class="tw"><use href="#i-closed-tri"/></svg><svg><use href="#t-sol"/></svg>Solution 1 <em>(sol1)</em></li>
                    <li class="l1"><svg class="tw"><use href="#i-open-tri"/></svg><svg><use href="#t-study"/></svg>Study 2</li>
                    <li class="l2"><i class="tw"></i><svg><use href="#t-wall"/></svg>Step 1: Wall Distance Initialization</li>
                    <li class="l2"><i class="tw"></i><svg><use href="#t-time"/></svg>Step 2: Time Dependent</li>
                    <li class="l2"><svg class="tw"><use href="#i-closed-tri"/></svg><svg><use href="#t-solver"/></svg>Solver Configurations</li>
                    <li class="l1"><svg class="tw"><use href="#i-open-tri"/></svg><svg><use href="#t-results"/></svg>Results</li>
                    <li class="l2"><svg class="tw"><use href="#i-closed-tri"/></svg><svg><use href="#t-data"/></svg>Datasets</li>
                    <li class="l2"><svg class="tw"><use href="#i-closed-tri"/></svg><b class="num">8.85<br>e-12</b>Derived Values</li>
                    <li class="l2"><svg class="tw"><use href="#i-closed-tri"/></svg><svg><use href="#t-table"/></svg>Tables</li>
                    <li class="l2"><svg class="tw"><use href="#i-closed-tri"/></svg><svg><use href="#t-vel"/></svg>Velocity (spf)</li>
                    <li class="l2"><svg class="tw"><use href="#i-closed-tri"/></svg><svg><use href="#t-velstar"/></svg>Pressure (spf)</li>
                    <li class="l2"><svg class="tw"><use href="#i-closed-tri"/></svg><svg><use href="#t-velstar"/></svg>Wall Resolution (spf)</li>
                    <li class="l2"><svg class="tw"><use href="#i-closed-tri"/></svg><svg><use href="#t-wave"/></svg>Cp at z=0</li>
                    <li class="l2"><svg class="tw"><use href="#i-closed-tri"/></svg><svg><use href="#t-export"/></svg>Export</li>
                    <li class="l2"><i class="tw"></i><svg><use href="#t-report"/></svg>Reports</li>
                </ul>
            </section>

            <!-- Settings -->
            <section class="panel settings">
                <div class="panel-head"><h2>Settings</h2><i class="caret big-caret"></i><svg class="pin"><use href="#i-pin"/></svg></div>
                <h3>LES RBVM</h3>
                <div class="ident">
                    <label for="label">Label:</label><input type="text" id="label" value="DES RBVM, Spalart-Allmaras">
                    <button aria-label="Show in tree"><svg><use href="#i-panel"/></svg></button>
                    <label for="name">Name:</label><input type="text" id="name" value="spf">
                </div>
                <button class="section"><svg><use href="#i-closed-tri"/></svg>Domain Selection</button>
                <button class="section"><svg><use href="#i-closed-tri"/></svg>Equation</button>
                <button class="section"><svg><use href="#i-closed-tri"/></svg>Physical Model</button>
                <button class="section"><svg><use href="#i-down-tri"/></svg>Turbulence</button>
                <div class="turbulence">
                    <label for="type">Turbulence model type:</label>
                    <div class="select"><select id="type"><option>Detached Eddy Simulation</option></select></div>
                    <label for="les">LES model:</label>
                    <div class="select"><select id="les"><option>RBVM</option></select></div>
                    <label for="model">Turbulence model:</label>
                    <div class="select"><select id="model"><option>Spalart-Allmaras</option></select></div>
                    <label for="wall">Wall treatment:</label>
                    <div class="select"><select id="wall"><option>Automatic</option></select></div>
                    <div class="legend">Turbulence model parameters</div>
                    <div class="check"><input type="checkbox" id="edit" checked><label for="edit">Edit DES model parameters</label></div>
                    <div class="param"><label for="cmu"><em>C</em><sub><em>μ</em></sub></label><input type="text" id="cmu" value="0.09"><span>1</span></div>
                    <p>Spalart-Allmaras parameters:</p>
                    <div class="param"><label for="cb1"><em>C</em><sub>b1</sub></label><input type="text" id="cb1" value="0.1355"><span>1</span></div>
                    <div class="param"><label for="cb2"><em>C</em><sub>b2</sub></label><input type="text" id="cb2" value="0.622"><span>1</span></div>
                    <div class="param"><label for="cv1"><em>C</em><sub>v1</sub></label><input type="text" id="cv1" value="7.1"><span>1</span></div>
                    <div class="param"><label for="sig"><em>σ</em><sub class="bar"><em>ν</em></sub></label><input type="text" id="sig" value="2/3"><span>1</span></div>
                    <div class="param"><label for="cw2"><em>C</em><sub>w2</sub></label><input type="text" id="cw2" value="0.3"><span>1</span></div>
                    <div class="param"><label for="cw3"><em>C</em><sub>w3</sub></label><input type="text" id="cw3" value="2"><span>1</span></div>
                    <div class="param"><label for="kv"><em>κ</em><sub><em>v</em></sub></label><input type="text" id="kv" value="0.41"><span>1</span></div>
                    <div class="param"><label for="b"><em>B</em></label><input type="text" id="b" value="5.2"><span>1</span></div>
                    <div class="param"><label for="cdes"><em>C</em><sub>DES</sub></label><input type="text" id="cdes" value="1"><span>1</span></div>
                </div>
                <button class="section"><svg><use href="#i-closed-tri"/></svg>Consistent Stabilization</button>
                <button class="section"><svg><use href="#i-closed-tri"/></svg>Discretization</button>
                <button class="section"><svg><use href="#i-closed-tri"/></svg>Dependent Variables</button>
            </section>

            <div class="right">
                <!-- Graphics -->
                <section class="panel graphics">
                    <div class="tabs">
                        <button>Graphics</button>
                        <button class="active">Flow Field <svg><use href="#i-x"/></svg></button>
                        <i class="caret big-caret"></i><svg class="pin"><use href="#i-pin"/></svg>
                    </div>
                    <div class="toolbar">
                        <button aria-label="Zoom In"><svg><use href="#g-in"/></svg></button>
                        <button aria-label="Zoom Out"><svg><use href="#g-out"/></svg></button>
                        <button aria-label="Zoom Box"><svg><use href="#g-box"/></svg></button>
                        <button class="drop" aria-label="Zoom options"><i class="caret"></i></button>
                        <button aria-label="Zoom Extents"><svg><use href="#g-extent"/></svg></button>
                        <span class="sep"></span>
                        <button aria-label="Default View"><svg><use href="#g-axes"/></svg></button>
                        <button class="drop" aria-label="View options"><i class="caret"></i></button>
                        <button class="plane"><svg><use href="#g-xy"/></svg><span>xy</span></button>
                        <button class="plane"><svg><use href="#g-yz"/></svg><span>yz</span></button>
                        <button class="plane"><svg><use href="#g-xz"/></svg><span>xz</span></button>
                        <span class="sep"></span>
                        <button aria-label="Rotate"><svg><use href="#g-rot"/></svg></button>
                        <button class="drop" aria-label="Rotate options"><i class="caret"></i></button>
                        <span class="sep"></span>
                        <button class="on split" aria-label="Scene Light"><svg><use href="#g-light"/></svg><span></span><i class="caret"></i></button>
                        <button aria-label="Transparency"><svg><use href="#g-wire"/></svg></button>
                        <button aria-label="Grid"><svg><use href="#g-grid"/></svg></button>
                        <button class="on" aria-label="Axis Orientation"><svg><use href="#g-triad"/></svg></button>
                        <button class="on" aria-label="Legends"><svg><use href="#g-legend"/></svg></button>
                        <span class="sep"></span>
                        <button aria-label="Lock"><svg><use href="#g-lock"/></svg></button>
                        <span class="sep"></span>
                        <button aria-label="Environment"><svg><use href="#g-aperture"/></svg></button>
                        <button class="drop" aria-label="Environment options"><i class="caret"></i></button>
                        <button aria-label="Snapshot"><svg><use href="#g-camera"/></svg></button>
                        <button aria-label="Print"><svg><use href="#g-print"/></svg></button>
                    </div>
                    <div class="canvas">
                        <svg class="scene" viewBox="671 210 1237 736" preserveAspectRatio="xMidYMid slice">
                            <defs>
                                <linearGradient id="floor" x1="0" x2="1"><stop offset="0" stop-color="#949391"/><stop offset=".5" stop-color="#989795"/><stop offset="1" stop-color="#838180"/></linearGradient>
                                <linearGradient id="slice" x1="0" x2="1"><stop offset="0" stop-color="#a9b8c2"/><stop offset=".3" stop-color="#b5babf"/><stop offset=".55" stop-color="#afb9c0"/><stop offset=".8" stop-color="#adb5bb"/><stop offset="1" stop-color="#a8b3ba"/></linearGradient>
                                <linearGradient id="slice-top" x1="0" y1="0" x2="0" y2="1"><stop offset="0" stop-color="#9fb4c0" stop-opacity=".7"/><stop offset=".5" stop-color="#a6b6bf" stop-opacity="0"/></linearGradient>
                                <linearGradient id="bump" x1="0" y1="0" x2="1" y2=".1"><stop offset="0" stop-color="#8d8c8a"/><stop offset=".25" stop-color="#6d6d6d"/><stop offset=".5" stop-color="#7d7c7b"/><stop offset=".8" stop-color="#777675"/><stop offset="1" stop-color="#969593"/></linearGradient>
                                <linearGradient id="bump-back" x1="0" y1="0" x2="1" y2="0"><stop offset="0" stop-color="#84939b" stop-opacity="0"/><stop offset=".3" stop-color="#758b95"/><stop offset="1" stop-color="#858c8f"/></linearGradient>
                                <linearGradient id="legend" x1="0" y1="0" x2="0" y2="1"><stop offset="0" stop-color="#fff"/><stop offset=".15" stop-color="#fff"/><stop offset=".32" stop-color="#cdeaff"/><stop offset=".5" stop-color="#94d5ff"/><stop offset=".72" stop-color="#1ea5ff"/><stop offset=".84" stop-color="#0072e0"/><stop offset=".93" stop-color="#00305f"/><stop offset="1" stop-color="#00000a"/></linearGradient>
                                <filter id="b1" x="-50%" y="-50%" width="200%" height="200%"><feGaussianBlur stdDeviation="1.500"/></filter>
                                <filter id="b4" x="-50%" y="-50%" width="200%" height="200%"><feGaussianBlur stdDeviation="4"/></filter>
                                <filter id="b9" x="-50%" y="-50%" width="200%" height="200%"><feGaussianBlur stdDeviation="10"/></filter>
                                <!-- blur, then stir with noise so the wake reads as eddies -->
                                <filter id="eddy" x="-20%" y="-20%" width="140%" height="140%">
                                    <feGaussianBlur stdDeviation="3" result="soft"/>
                                    <feTurbulence type="fractalNoise" baseFrequency="0.025 0.045" numOctaves="3" seed="7" result="noise"/>
                                    <feDisplacementMap in="soft" in2="noise" scale="36" xChannelSelector="R" yChannelSelector="G"/>
                                    <feGaussianBlur stdDeviation="1"/>
                                </filter>
                                <clipPath id="slice-clip"><path d="M671 415L1644 436V625L1095 697L1075 682L1043 660L1018 643L988 628L960 621L929 630L910 642L881 670L860 695L835 718L805 735L671 753z"/></clipPath>
                                <clipPath id="bump-clip"><path d="M1130 712C1112 728 1010 738 925 740C870 740 840 736 805 735L835 718L860 695L881 670L910 642L929 630L943 623L960 621L976 622L988 629L1018 643L1043 660L1075 683L1090 694L1107 703z"/></clipPath>
                            </defs>

                            <!-- ceiling -->
                            <path d="M671 403L1089 389L1250 397L1908 428V433L1644 437L671 424z" fill="#696969"/>
                            <path d="M671 403L1089 389L1250 397L1908 428" fill="none" stroke="#b9b9b9" stroke-dasharray="16 14"/>
                            <path d="M1644 437L1908 433" stroke="#c8c8c8"/>

                            <!-- vertical slice -->
                            <path d="M671 415L1644 436V625L1095 697L980 712L805 735L671 753z" fill="url(#slice)"/>
                            <path d="M671 415L1644 436V625L671 753z" fill="url(#slice-top)"/>
                            <path d="M671 412L1220 430V437L1140 433L671 424z" fill="#73838b"/>
                            <g clip-path="url(#slice-clip)">
                                <g filter="url(#b9)">
                                    <path d="M1000 650L1060 615L1120 630L1180 600L1245 612L1215 650L1150 680L1080 700z" fill="#6fa6c9" opacity=".8"/>
                                    <ellipse cx="1432" cy="598" rx="13" ry="11" fill="#6ba9cf"/>
                                    <ellipse cx="1468" cy="563" rx="10" ry="18" fill="#95b8cb"/>
                                    <ellipse cx="1440" cy="580" rx="34" ry="26" fill="#9ab6c6" opacity=".6"/>
                                    <ellipse cx="1560" cy="603" rx="34" ry="10" fill="#93b4c7" opacity=".8"/>
                                    <ellipse cx="1310" cy="645" rx="60" ry="14" fill="#7fa3b8" opacity=".6"/>
                                    <ellipse cx="1465" cy="526" rx="16" ry="10" fill="#b9b5b4" opacity=".8"/>
                                    <ellipse cx="1180" cy="588" rx="26" ry="10" fill="#bfbaba" opacity=".7"/>
                                    <ellipse cx="1082" cy="596" rx="14" ry="8" fill="#bfbaba" opacity=".7"/>
                                </g>
                                <g filter="url(#eddy)" fill="none" stroke-linecap="round">
                                    <path d="M996 632Q1020 632 1044 648T1080 690" stroke="#2f86c2" stroke-width="20"/>
                                    <path d="M1060 660Q1084 650 1098 690" stroke="#2f7db4" stroke-width="18"/>
                                    <path d="M1066 640Q1074 622 1086 618" stroke="#4a9bcb" stroke-width="5"/>
                                    <path d="M1090 640Q1130 640 1146 612T1180 606" stroke="#4c9ccc" stroke-width="7"/>
                                    <path d="M1100 670Q1140 640 1190 650" stroke="#4c8fb8" stroke-width="12"/>
                                    <path d="M1174 612Q1180 636 1172 656" stroke="#2677b0" stroke-width="16"/>
                                    <path d="M1110 686Q1150 672 1200 674T1244 640" stroke="#3a86b4" stroke-width="6"/>
                                    <path d="M1230 640Q1244 628 1256 612" stroke="#6ea8c9" stroke-width="6"/>
                                    <path d="M1046 620L1066 690M1110 640L1080 660" stroke="#a9bfcc" stroke-width="4"/>
                                    <path d="M1120 672Q1140 656 1156 664M1196 660Q1214 652 1230 640" stroke="#c4bcb6" stroke-width="6"/>
                                    <path d="M1300 650Q1340 640 1390 642" stroke="#6f9db8" stroke-width="4"/>
                                    <path d="M1306 636Q1330 628 1350 626" stroke="#c4b8b0" stroke-width="5" opacity=".6"/>
                                </g>
                                <g filter="url(#b1)" fill="none" stroke-linecap="round">
                                    <path d="M1066 650Q1070 632 1078 618M1078 646Q1090 634 1100 636M1120 640Q1134 630 1142 612" stroke="#3f93c6" stroke-width="2" opacity=".7"/>
                                    <path d="M1091 654V664M1090 672V688M1024 636V638M1036 652L1042 658M1168 632V648" stroke="#12405f" stroke-width="3" opacity=".8"/>
                                    <path d="M1160 668Q1190 670 1212 660" stroke="#1f6fa2" stroke-width="2" opacity=".8"/>
                                </g>
                                <!-- floor seen through the slice -->
                                <path d="M671 677L867 659L1018 643L1280 619L1340 611L1366 611L1644 626V640L805 760L671 753z" fill="#5e6466" opacity=".47"/>
                                <path d="M757 720C775 718 790 712 800 706C825 693 840 682 850 672L893 640C910 629 922 625 935 623H990V740H757z" fill="url(#bump-back)"/>
                                <path d="M800 732C822 728 846 706 868 682L900 650" fill="none" stroke="#2a6c92" stroke-width="7" filter="url(#b4)" opacity=".9"/>
                            </g>

                            <!-- near floor -->
                            <path d="M671 753L805 735L1095 697L1644 625L1908 638V659L1434 759L1089 832L671 771z" fill="url(#floor)"/>
                            <path d="M671 771L1089 832L1434 759L1908 659" fill="none" stroke="#fff"/>
                            <path d="M671 772L1089 833L1434 760L1908 660" fill="none" stroke="#b5b5b5" stroke-dasharray="6 4"/>
                            <path d="M1644 625L1908 638" stroke="#c6c6c6" stroke-dasharray="10 10"/>

                            <!-- bump -->
                            <g clip-path="url(#bump-clip)">
                                <path d="M800 615H1140V745H800z" fill="url(#bump)"/>
                                <path d="M800 746Q925 740 1135 726V760H800z" fill="#a09f9d" filter="url(#b9)"/>
                                <ellipse cx="957" cy="638" rx="20" ry="14" fill="#c4c3c1" filter="url(#b9)"/>
                                <ellipse cx="957" cy="637" rx="17" ry="11" fill="#dcdbd8" filter="url(#b4)"/>
                                <ellipse cx="957" cy="636" rx="15" ry="9" fill="#fff" filter="url(#b1)"/>
                                <path d="M870 738Q960 700 1080 728L1000 738L925 739z" fill="#c9c8c4" filter="url(#b9)"/>
                                <path d="M895 736Q930 722 965 719Q1010 719 1045 729Q990 740 895 738z" fill="#f4f3ef" filter="url(#b4)"/>
                                <path d="M904 735Q935 723 965 720Q1005 720 1035 729Q990 738 904 737z" fill="#fff" filter="url(#b1)"/>
                            </g>
                            <path d="M1107 704Q1122 707 1130 712" fill="none" stroke="#aeadab" stroke-width="2" filter="url(#b1)"/>
                            <path d="M835 718L860 695L881 670L910 642L929 630" fill="none" stroke="#9b009b" stroke-dasharray="10 5"/>
                            <path d="M929 630L943 623L960 621L976 622L988 630L976 624L960 623L943 624z" fill="#9b009b" stroke="#9b009b"/>

                            <!-- wall resolution bands -->
                            <g fill="#9b009b">
                                <path d="M671 408L767 411L870 414L1000 417L1140 421L1250 425L1330 428L1450 430L1530 433L1644 436V440L1495 437L1403 436L1410 440L1470 443L1480 445L1560 449L1644 453V458H1618L1606 455H1550L1525 452L1452 450L1440 448H1390L1380 446L1330 442L1305 441L1250 437L1215 435L1160 430L1120 427L1090 425L1000 423L960 421L880 420L800 417H782L775 420H735L671 417z"/>
                                <path d="M671 746L775 731L780 733L800 731L820 721L838 717L822 731L805 736L671 753z"/>
                                <path d="M1088 694H1098L1099 683L1120 679L1152 674L1190 675L1200 678L1228 672L1248 670L1250 663L1286 658L1289 662H1297L1301 655L1335 650L1340 650L1346 646L1365 644L1377 647L1392 651L1402 649L1412 640L1428 634L1445 632L1465 634L1492 635L1505 627L1525 622L1542 625L1560 619L1562 621L1550 627L1548 630L1562 633L1580 629L1605 625L1620 618L1626 610L1644 604V625L1250 676L1095 698z"/>
                            </g>

                            <!-- legend and labels -->
                            <path d="M701.500 288.500h14v563h-14z" fill="url(#legend)" stroke="#707880"/>
                            <path d="M702 374h3M712 374h3M702 469h3M712 469h3M702 565h3M712 565h3M702 661h3M712 661h3M702 757h3M712 757h3" stroke="#000"/>
                            <g class="plot-text">
                                <text x="688" y="232">Time=19.99 s</text>
                                <text x="1114" y="233">Slice: Velocity magnitude (m/s) Slice: spf.muT/spf.mu (1)</text>
                                <text x="716" y="262">m/s</text>
                                <text x="725" y="378">2.5</text>
                                <text x="725" y="474">2</text>
                                <text x="724" y="570">1.5</text>
                                <text x="724" y="665">1</text>
                                <text x="725" y="761">0.5</text>
                                <text x="712" y="866">y</text>
                                <text x="734" y="905">x z</text>
                            </g>
                            <path d="M715.500 902V880" stroke="#4aaa3e" stroke-width="2"/>
                            <path d="M712 881l3.500-9 3.500 9z" fill="#4aaa3e"/>
                            <path d="M715 902h14" stroke="#3f7ab8" stroke-width="2"/>
                            <circle cx="727" cy="902" r="3" fill="#d6204e"/>
                            <path d="M729 899l10 3-10 3z" fill="#3f7ab8"/>
                            <path d="M1886 217l10-2 5 3v8l-4 4-9-2z" fill="#d5dae0"/><path d="M1888 218h10v8h-10z" fill="#1d4fa0"/><path d="M1891 219h6v5h-6z" fill="#5fa8d8"/><path d="M1893 220h4v3h-4z" fill="#d9d860"/>
                        </svg>
                    </div>
                </section>

                <!-- Messages / table -->
                <section class="panel output">
                    <div class="tabs">
                        <button>Messages <svg><use href="#i-x"/></svg></button>
                        <button>Progress</button>
                        <button>Log</button>
                        <button class="active">Table 1 <svg><use href="#i-x"/></svg></button>
                        <i class="caret big-caret"></i><svg class="pin"><use href="#i-pin"/></svg>
                    </div>
                    <div class="toolbar">
                        <button aria-label="Precision"><svg><use href="#b-prec"/></svg></button>
                        <span class="sep"></span>
                        <button class="txt">8.85<br>e-12</button>
                        <button class="txt auto on">AUTO</button>
                        <button class="txt">8.5<br>e-1</button>
                        <button class="txt">850<br>e-3</button>
                        <button class="txt">0.85</button>
                        <span class="sep"></span>
                        <button class="on" aria-label="Cartesian"><svg><use href="#b-full"/></svg></button>
                        <button aria-label="Polar"><svg><use href="#b-polar"/></svg></button>
                        <span class="sep"></span>
                        <button aria-label="Clear Table"><svg><use href="#b-broom"/></svg></button>
                        <button aria-label="Delete Table"><svg><use href="#i-trash"/></svg></button>
                        <button aria-label="Table Graph"><svg><use href="#b-graph"/></svg></button>
                        <button aria-label="Table Surface"><svg><use href="#b-square"/></svg></button>
                        <button aria-label="Table Contour"><svg><use href="#b-contour"/></svg></button>
                        <button aria-label="Copy Table"><svg><use href="#b-copytab"/></svg></button>
                        <button aria-label="Export Table"><svg><use href="#b-exptab"/></svg></button>
                        <button aria-label="Duplicate Table"><svg><use href="#b-wins"/></svg></button>
                        <button aria-label="Display Table"><svg><use href="#b-newtab"/></svg></button>
                        <button class="drop" aria-label="Table options"><i class="caret"></i></button>
                    </div>
                    <div class="table-area"></div>
                </section>
            </div>
        </main>

        <footer class="status">8.09 GB | 8.33 GB</footer>
    </div>
</body>
</html>
```

FILE: styles.css
```css
* {
    box-sizing: border-box;
}
body {
    margin: 0;
    height: 100vh;
    display: flex;
    flex-direction: column;
    background: #fff;
    color: #000;
    font-family: "Noto Sans", "Open Sans", sans-serif;
    font-size: 11px;
    line-height: 14px;
    overflow: hidden;
}
h1, h2, h3, p, ul {
    margin: 0;
    padding: 0;
    font-weight: normal;
}
button, input, select {
    font: inherit;
    color: inherit;
    margin: 0;
}
button {
    background: none;
    border: none;
    padding: 0;
    white-space: nowrap;
}
svg {
    width: 16px;
    height: 16px;
    flex: none;
}
.sprite {
    position: absolute;
    width: 0;
    height: 0;
}
.caret {
    display: inline-block;
    width: 0;
    height: 0;
    border: 3px solid transparent;
    border-top: 4px solid currentColor;
    border-bottom: 0;
    vertical-align: middle;
}
.big-caret {
    border-width: 4px 4px 0;
}

/* Title bar */
.titlebar {
    height: 27px;
    flex: none;
    display: flex;
    align-items: center;
    padding: 3px 8px 0 4px;
}
.qsep {
    width: 1px;
    height: 14px;
    background: #9a9a9a;
    margin: 0 4px 0 13px;
}
.qsep.after {
    margin: 0 0 0 7px;
}
.quick {
    display: flex;
}
.quick button {
    width: 24px;
    height: 18px;
    display: flex;
    align-items: center;
    justify-content: center;
}
.titlebar h1 {
    flex: 1;
    font-size: 12px;
    padding: 1px 0 0 80px;
    text-align: center;
}
.winctl {
    display: flex;
}
.winctl button {
    width: 46px;
}
.winctl svg {
    width: 12px;
    height: 12px;
}

.app {
    flex: 1;
    min-height: 0;
    display: flex;
    flex-direction: column;
    margin: 0 4px;
    padding: 3px 7px 0;
    background: #fafbff;
}

/* Ribbon */
.ribbon-tabs {
    display: flex;
    height: 24px;
    flex: none;
    background: #ebecee;
}
.ribbon-tabs button {
    padding: 1px 9px 0 10px;
}
.ribbon-tabs .file {
    width: 56px;
    background: #338fd0;
    color: #fff;
}
.ribbon-tabs .active {
    background: #fafbff;
    color: #338fd0;
    width: 51px;
}
.ribbon-tabs .help {
    width: 16px;
    height: 16px;
    margin: 3px 3px 0 auto;
    padding: 0;
    font-size: 12px;
    background: #338fd0;
    color: #fff;
}
.ribbon {
    display: flex;
    flex: none;
    height: 91px;
    padding: 8px 0 7px;
    border: 1px solid #d0d2d8;
    border-top: none;
    margin-bottom: 4px;
}
.group {
    display: flex;
    flex-direction: column;
    padding: 0 5px 0 6px;
    border-right: 1px solid #d0d2d8;
}
.group h2 {
    margin-top: auto;
    font-size: 11px;
    line-height: 6px;
    text-align: center;
    color: #707070;
}
.items {
    display: flex;
    margin-top: -3px;
}
.big {
    display: flex;
    flex-direction: column;
    align-items: center;
    min-width: 44px;
    height: 62px;
    padding: 0 5px;
    line-height: 13px;
}
.big svg {
    width: 28px;
    height: 28px;
    margin: 3px 0 4px;
}
.big.wide {
    min-width: 48px;
}
.pi {
    height: 35px;
    font-size: 22px;
    line-height: 35px;
    font-weight: normal;
    color: #338fd0;
}
.pi sub {
    font-size: 18px;
    line-height: 18px;
}
.stack {
    display: flex;
    flex-direction: column;
    gap: 4px;
    margin-top: -1px;
    padding-right: 5px;
}
.stack button {
    display: flex;
    align-items: center;
    gap: 2px;
    height: 18px;
}
.stack .caret {
    margin-left: 2px;
}
.stack button:disabled {
    color: #aeb0b4;
}
.glyph {
    width: 16px;
    flex: none;
    font-size: 12px;
    font-weight: normal;
    color: #338fd0;
    text-align: center;
}
.glyph sub {
    font-size: 10px;
    line-height: 10px;
}
.glyph.fx {
    font-size: 10px;
    text-indent: -2px;
}
button:disabled .glyph {
    opacity: 0.4;
}

/* Panels */
.desktop {
    flex: 1;
    min-height: 0;
    display: grid;
    grid-template-columns: 301px 348px 1fr;
    gap: 5px;
}
.panel {
    display: flex;
    flex-direction: column;
    min-height: 0;
    border: 1px solid #cfd2d8;
}
.panel-head {
    display: flex;
    align-items: center;
    height: 32px;
    flex: none;
    padding: 4px 3px 0 7px;
    color: #404040;
}
.panel-head h2 {
    flex: 1;
    font-family: "Open Sans", "Noto Sans", sans-serif;
    font-weight: 300;
    font-size: 19px;
    line-height: 24px;
    color: #2b579a;
}
.pin {
    width: 10px;
    height: 12px;
    margin-left: 5px;
}
.toolbar {
    display: flex;
    align-items: center;
    gap: 3px;
    height: 20px;
    flex: none;
    padding-left: 5px;
}
.toolbar button {
    width: 20px;
    height: 20px;
    display: flex;
    align-items: center;
    justify-content: center;
    position: relative;
}
.toolbar .drop {
    width: 14px;
    margin: 0 3px 0 -3px;
}
.sep {
    width: 1px;
    height: 17px;
    margin: 0 2px;
    background: #d0d2d8;
}
.toolbar .on {
    background: #99cffb;
    border: 1px solid #1b8cea;
    border-radius: 2px;
}
.toolbar .split {
    width: 37px;
    gap: 4px;
}
.split span {
    width: 1px;
    height: 18px;
    background: #1b8cea;
}
.plane span {
    position: absolute;
    right: 1px;
    top: 1px;
    font-size: 9px;
    line-height: 11px;
    color: #85878a;
}

/* Tree */
.tree {
    flex: 1;
    margin: 3px 4px 8px;
    background: #fff;
    border: 1px solid #cfd2d8;
    list-style: none;
    overflow: hidden;
}
.tree li {
    display: flex;
    align-items: center;
    height: 18px;
    white-space: pre;
}
.tree li > :nth-child(2) {
    margin-right: 6px;
}
.tree em {
    margin-left: 3px;
}
.tree .tw {
    width: 8px;
    height: 10px;
    flex: none;
    margin-right: 7px;
}
.tree .l0 { padding-left: 5px; }
.tree .l1 { padding-left: 25px; }
.tree .l2 { padding-left: 45px; }
.tree .l3 { padding-left: 65px; }
.tree .selected {
    background: #dadadd;
}
.num {
    width: 16px;
    flex: none;
    font-size: 7px;
    font-weight: normal;
    line-height: 7px;
    color: #b453a0;
}

/* Settings */
.settings h3 {
    padding-left: 6px;
    font-family: "Open Sans", "Noto Sans", sans-serif;
    font-weight: 300;
    font-size: 13px;
    line-height: 26px;
    color: #2b579a;
}
.ident {
    display: grid;
    grid-template-columns: 45px 1fr 28px;
    row-gap: 8px;
    align-items: center;
    padding: 9px 5px 10px;
}
.ident input {
    height: 18px;
}
.ident button {
    display: flex;
    width: 20px;
    height: 22px;
    margin: -2px 0 -2px 8px;
    align-items: center;
    justify-content: center;
    border: 1px solid #d0d2d6;
    border-radius: 2px;
    background: #ececec;
}
input[type="text"] {
    min-width: 0;
    border: 1px solid #cfd1d6;
    background: #fff;
    padding: 0 2px;
    line-height: 14px;
}
.section {
    display: flex;
    align-items: center;
    gap: 14px;
    height: 26px;
    flex: none;
    margin-bottom: 2px;
    padding: 1px 0 0 5px;
    font-size: 12px;
    background: #dde8f4;
}
.section svg {
    width: 10px;
    height: 10px;
    margin-right: -3px;
}
.turbulence {
    padding: 7px 5px 7px;
}
.turbulence > label {
    display: block;
    line-height: 17px;
    margin-bottom: 4px;
}
.select {
    position: relative;
    height: 21px;
    margin-bottom: 6px;
}
.select::after {
    content: "";
    position: absolute;
    right: 7px;
    top: 9px;
    border: 4px solid transparent;
    border-top-color: #000;
    border-bottom: 0;
}
select {
    appearance: none;
    width: 100%;
    height: 21px;
    padding: 0 12px;
    border: 1px solid #cdcfd3;
    border-radius: 2px;
    background: linear-gradient(#f0f0f1, #e8e8e8);
}
.legend {
    display: flex;
    align-items: center;
    gap: 3px;
    height: 14px;
    margin-top: 7px;
}
.legend::before, .legend::after {
    content: "";
    height: 1px;
    width: 10px;
    background: #d0d2d8;
}
.legend::after {
    flex: 1;
}
.check {
    display: flex;
    align-items: center;
    gap: 5px;
    height: 14px;
    margin: 7px 0 6px 1px;
}
.check input {
    appearance: none;
    width: 14px;
    height: 13px;
    border: 1px solid #808080;
    background: #fff;
    position: relative;
}
.check input::after {
    content: "";
    position: absolute;
    left: 4px;
    top: 0;
    width: 4px;
    height: 9px;
    border: solid #222;
    border-width: 0 2px 2px 0;
    transform: rotate(40deg);
}
.turbulence p {
    line-height: 14px;
    padding: 2px 0;
    margin-bottom: 4px;
}
.param {
    display: flex;
    align-items: center;
    height: 18px;
    margin-bottom: 6px;
}
.param label {
    width: 42px;
    padding-left: 2px;
    font-size: 12px;
    line-height: 12px;
    color: #222;
}
.param sub {
    font-size: 10px;
    line-height: 10px;
    vertical-align: -4px;
}
.param .bar {
    text-decoration: overline;
}
.param input {
    flex: 1;
    height: 18px;
}
.param span {
    width: 16px;
    text-align: right;
}

/* Right column */
.right {
    display: flex;
    flex-direction: column;
    gap: 5px;
    min-width: 0;
    min-height: 0;
}
.graphics {
    flex: 1;
    border-color: #99cdf8;
    background: linear-gradient(#fbfcff, #fafcff 20%, #e4f1fe);
}
.tabs {
    display: flex;
    align-items: flex-end;
    gap: 8px;
    height: 29px;
    flex: none;
    padding: 0 3px;
    border-bottom: 1px solid #cfd2d8;
    color: #404040;
}
.tabs button {
    display: flex;
    align-items: center;
    gap: 8px;
    height: 23px;
    padding: 0 5px;
    background: #ebebec;
    font-size: 12px;
    color: #000;
}
.tabs button svg {
    width: 12px;
    height: 12px;
    color: #c3c9d6;
}
.tabs .active {
    height: 24px;
    margin-bottom: -1px;
    background: #fafbff;
    border: 1px solid #cfd2d8;
    border-bottom: none;
    color: #2b579a;
}
.tabs .big-caret {
    margin: 0 0 8px auto;
}
.tabs .pin {
    margin: 0 0 4px -3px;
}
.graphics .tabs {
    color: #338fd0;
}
.graphics .tabs .active, .graphics .tabs .active svg {
    color: #1b8cea;
}
.graphics .toolbar, .output .toolbar {
    height: 31px;
}
.graphics .toolbar {
    padding-bottom: 2px;
}
.graphics .sep {
    margin-right: 3px;
}
.canvas {
    flex: 1;
    min-height: 0;
}
.scene {
    display: block;
    width: 100%;
    height: 100%;
}
.plot-text {
    font-family: "DejaVu Sans", sans-serif;
    font-size: 12px;
}
.output .toolbar {
    padding-left: 9px;
}
.toolbar .txt {
    display: block;
    font-size: 8px;
    line-height: 10px;
    color: #2f83c6;
}
.toolbar .auto {
    font-size: 6px;
    font-weight: bold;
}
.table-area {
    height: 23px;
    margin: 0 8px 7px;
    border: 1px solid #cfd2d8;
    background: #fdfdfe;
}
.status {
    height: 36px;
    flex: none;
    padding: 13px 0 0 calc(64% + 7px);
}
```
